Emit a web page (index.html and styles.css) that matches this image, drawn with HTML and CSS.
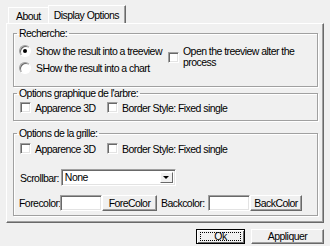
FILE: index.html
```html
<!DOCTYPE html>
<html lang="en">
<head>
    <meta charset="UTF-8">
    <title>Display Options</title>
    <link rel="stylesheet" href="styles.css">
</head>
<body>
    <div class="tabs">
        <div class="tab">About</div>
        <div class="tab active">Display Options</div>
    </div>

    <div class="panel">
        <fieldset class="group search">
            <legend>Recherche:</legend>
            <div class="search-body">
                <div class="radios">
                    <label class="opt"><span class="radio checked"></span>Show the result into a treeview</label>
                    <label class="opt"><span class="radio"></span>SHow the result into a chart</label>
                </div>
                <label class="opt open-tree"><span class="check"></span><span>Open the treeview alter the<br>process</span></label>
            </div>
        </fieldset>

        <fieldset class="group tree">
            <legend>Options graphique de l'arbre:</legend>
            <div class="checks">
                <label class="opt"><span class="check"></span>Apparence 3D</label>
                <label class="opt"><span class="check"></span>Border Style: Fixed single</label>
            </div>
        </fieldset>

        <fieldset class="group grid">
            <legend>Options de la grille:</legend>
            <div class="checks">
                <label class="opt"><span class="check"></span>Apparence 3D</label>
                <label class="opt"><span class="check"></span>Border Style: Fixed single</label>
            </div>

            <div class="row scroll-row">
                <span class="lbl">Scrollbar:</span>
                <div class="combo">
                    <span class="combo-value">None</span>
                    <span class="combo-btn"><span class="arrow"></span></span>
                </div>
            </div>

            <div class="row color-row">
                <span class="lbl">Forecolor:</span>
                <span class="textbox"></span>
                <button class="btn color-btn">ForeColor</button>
                <span class="lbl back-lbl">Backcolor:</span>
                <span class="textbox"></span>
                <button class="btn color-btn back-btn">BackColor</button>
            </div>
        </fieldset>
    </div>

    <div class="actions">
        <button class="btn default"><span class="focus">Ok</span></button>
        <button class="btn apply">Appliquer</button>
    </div>
</body>
</html>
```

FILE: styles.css
```css
:root {
    --face: #f0f0f0;
    --shadow: #a0a0a0;
    --dark: #696969;
    --light: #e3e3e3;
}

* {
    box-sizing: border-box;
    margin: 0;
    padding: 0;
}

body {
    font-family: "Liberation Sans", Arial, sans-serif;
    font-size: 10.5px;
    letter-spacing: -0.55px;
    color: #000;
    background: var(--face);
    width: 330px;
    height: 246px;
    overflow: hidden;
}

/* tab strip */
.tabs {
    display: flex;
    align-items: flex-end;
    height: 23px;
    padding-left: 8px;
}

.tab {
    height: 16px;
    line-height: 16px;
    padding: 0 7px;
    border-top: 1px solid #fff;
    border-left: 1px solid #fff;
    white-space: nowrap;
}

.tab.active {
    height: 18px;
    padding: 1px 6px 0 5px;
    border-right: 1px solid var(--dark);
    box-shadow: inset -1px 0 0 var(--shadow);
}

/* page */
.panel {
    margin-left: 6px;
    width: 318px;
    height: 200px;
    padding: 3px 0 0 6px;
    border: 1px solid;
    border-color: #fff var(--dark) var(--dark) #fff;
    box-shadow: inset -1px -1px 0 var(--shadow);
}

.group {
    width: 305px;
    min-width: 0;
    border: 1px solid var(--shadow);
    box-shadow: inset 1px 1px 0 #fff, 1px 1px 0 #fff;
    padding: 0 5px 0 6px;
}

.group legend {
    line-height: 13px;
    padding: 0 2px;
    margin-left: -3px;
}

.opt {
    display: flex;
    align-items: center;
    white-space: nowrap;
}

/* recherche */
.search {
    padding-bottom: 10px;
}

.search-body {
    display: grid;
    grid-template-columns: 148px 1fr;
    padding-top: 2px;
}

.radios .opt {
    height: 17px;
    gap: 5px;
    margin-left: -1px;
}

.radio {
    flex: none;
    width: 12px;
    height: 12px;
    border-radius: 50%;
    background: #fff;
    border: 1px solid;
    border-color: var(--shadow) #fff #fff var(--shadow);
    box-shadow: inset 1px 1px 0 var(--dark);
    position: relative;
}

.radio.checked::after {
    content: "";
    position: absolute;
    left: 3px;
    top: 3px;
    width: 4px;
    height: 4px;
    border-radius: 50%;
    background: #000;
}

.check {
    flex: none;
    width: 11px;
    height: 11px;
    background: #fff;
    border: 1px solid;
    border-color: var(--shadow) #fff #fff var(--shadow);
    box-shadow: inset 1px 1px 0 var(--dark), inset -1px -1px 0 var(--light);
}

.open-tree {
    align-self: start;
    margin-top: 4px;
    gap: 4px;
    line-height: 11px;
}

/* checkbox rows */
.checks {
    display: grid;
    grid-template-columns: 87px auto;
}

.checks .opt {
    height: 15px;
    gap: 4px;
}

.tree {
    padding-bottom: 5px;
}

.grid {
    margin-top: 6px;
    padding-bottom: 4px;
}

.grid .checks {
    padding-top: 1px;
}

.row {
    display: flex;
    align-items: center;
}

.lbl {
    white-space: nowrap;
}

.scroll-row {
    margin-top: 13px;
    gap: 2px;
}

.combo {
    display: flex;
    width: 115px;
    height: 17px;
    background: #fff;
    border: 1px solid;
    border-color: var(--shadow) #fff #fff var(--shadow);
    box-shadow: inset 1px 1px 0 var(--dark), inset -1px -1px 0 var(--light);
    padding: 2px;
}

.combo-value {
    flex: 1;
    line-height: 11px;
    padding-left: 1px;
}

.combo-btn {
    width: 13px;
    height: 11px;
    background: var(--face);
    border: 1px solid;
    border-color: #fff var(--dark) var(--dark) #fff;
    display: flex;
    align-items: center;
    justify-content: center;
}

.arrow {
    border-left: 3px solid transparent;
    border-right: 3px solid transparent;
    border-top: 3px solid #000;
}

.color-row {
    margin-top: 9px;
    height: 16px;
}

.color-row .lbl {
    width: 41px;
    margin-left: -1px;
}

.textbox {
    width: 42px;
    height: 16px;
    background: #fff;
    border: 1px solid;
    border-color: var(--shadow) #fff #fff var(--shadow);
    box-shadow: inset 1px 1px 0 var(--dark), inset -1px -1px 0 var(--light);
}

.btn {
    font: inherit;
    letter-spacing: inherit;
    color: #000;
    background: var(--face);
    border: 1px solid;
    border-color: #fff var(--dark) var(--dark) #fff;
    box-shadow: inset -1px -1px 0 var(--shadow);
    height: 16px;
    line-height: 13px;
}

.color-btn {
    width: 55px;
}

.color-row .back-lbl {
    width: 47px;
    margin-left: 4px;
}

.color-row .back-btn {
    width: 52px;
}

/* dialog buttons */
.actions {
    display: flex;
    justify-content: flex-end;
    gap: 6px;
    margin-top: 6px;
    padding-right: 6px;
}

.actions .btn {
    height: 15px;
}

.btn.default {
    width: 49px;
    border-color: #000;
    box-shadow: inset 1px 1px 0 #fff, inset -1px -1px 0 var(--dark);
    display: flex;
    padding: 2px 3px;
}

.focus {
    flex: 1;
    border: 1px dotted #000;
    line-height: 7px;
}

.apply {
    width: 73px;
}
```
